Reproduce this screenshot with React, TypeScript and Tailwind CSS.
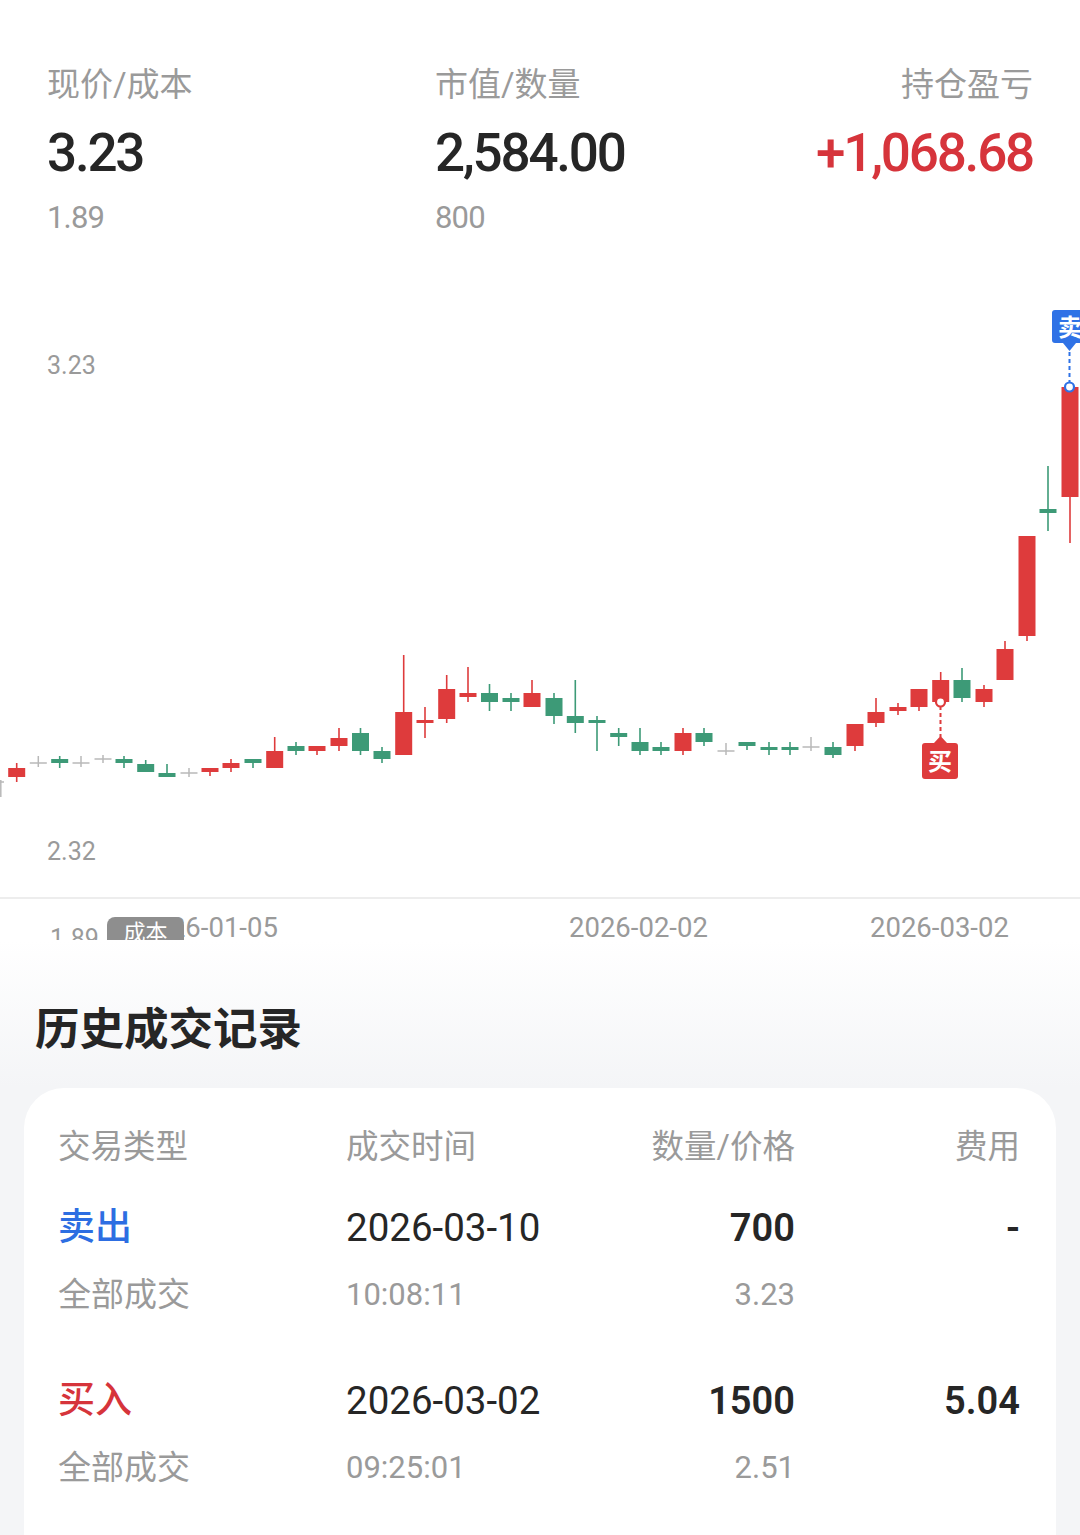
import React from "react";

type C = [number, number, number, number, number, "r" | "g" | "n"];

const RED = "#de3b3c";
const GREEN = "#3d9a77";
const GRAY = "#b8b8b8";

const candles: C[] = [
  [16.7, 768, 777, 763, 782, "r"],
  [38.3, 763, 763, 756, 767, "n"],
  [59.7, 759, 763, 756, 768, "g"],
  [81, 763, 763, 756, 767, "n"],
  [103, 759, 759, 755, 763, "n"],
  [124, 759, 763, 756, 768, "g"],
  [145.7, 764, 772, 760, 772, "g"],
  [167, 773, 777, 764, 777, "g"],
  [189, 773, 773, 768, 777, "n"],
  [210, 768, 772, 768, 776, "r"],
  [231, 763, 768, 759, 772, "r"],
  [253, 759, 763, 759, 768, "g"],
  [274.7, 751, 768, 737, 768, "r"],
  [296, 746, 751, 742, 755, "g"],
  [317, 746, 751, 746, 755, "r"],
  [339, 738, 746, 728, 751, "r"],
  [360.5, 733, 751, 728, 755, "g"],
  [382, 751, 759, 747, 763, "g"],
  [403.7, 712, 755, 655, 755, "r"],
  [425, 720, 723, 707, 738, "r"],
  [446.7, 689, 719, 675, 723, "r"],
  [468, 693, 697, 667, 702, "r"],
  [489.5, 693, 702, 684, 711, "g"],
  [511, 698, 702, 693, 711, "g"],
  [532, 693, 707, 680, 707, "r"],
  [554, 698, 716, 693, 724, "g"],
  [575.3, 716, 723, 680, 733, "g"],
  [597, 720, 723, 716, 751, "g"],
  [618.7, 733, 737, 728, 746, "g"],
  [640, 742, 751, 728, 755, "g"],
  [661, 747, 751, 742, 755, "g"],
  [683, 733, 751, 728, 755, "r"],
  [704, 733, 742, 728, 746, "g"],
  [726, 751, 751, 743, 755, "n"],
  [747, 742, 746, 742, 750, "g"],
  [769, 747, 750, 742, 755, "g"],
  [790, 747, 750, 742, 755, "g"],
  [811, 747, 747, 737, 751, "n"],
  [833, 747, 755, 742, 758, "g"],
  [855, 724, 746, 724, 751, "r"],
  [876, 712, 723, 698, 727, "r"],
  [898, 707, 711, 703, 715, "r"],
  [919, 689, 707, 689, 711, "r"],
  [940.7, 680, 702, 672, 702, "r"],
  [962, 680, 698, 668, 702, "g"],
  [984, 689, 702, 685, 707, "r"],
  [1005, 649, 680, 641, 680, "r"],
  [1027, 536, 636, 536, 641, "r"],
  [1048, 509, 513, 466, 531, "g"],
  [1070, 387, 497, 387, 543, "r"],
];

function Chart() {
  return (
    <svg
      width={1080}
      height={702}
      viewBox="0 238 1080 702"
      className="absolute left-0 top-0"
    >
      <line x1={0.8} y1={780} x2={0.8} y2={797} stroke={GRAY} strokeWidth={1.5} />
      <line x1={0} y1={782} x2={4} y2={782} stroke={GRAY} strokeWidth={1.5} />
      {candles.map(([x, bt, bb, wt, wb, c], i) => {
        const col = c === "r" ? RED : c === "g" ? GREEN : GRAY;
        if (c === "n") {
          return (
            <g key={i}>
              <line x1={x} y1={wt} x2={x} y2={wb} stroke={col} strokeWidth={1.5} />
              <line x1={x - 8.5} y1={bt} x2={x + 8.5} y2={bt} stroke={col} strokeWidth={1.5} />
            </g>
          );
        }
        const h = Math.max(bb - bt, 3);
        return (
          <g key={i}>
            <line x1={x} y1={wt} x2={x} y2={wb} stroke={col} strokeWidth={1.6} />
            <rect x={x - 8.5} y={bt} width={17} height={h} fill={col} />
          </g>
        );
      })}

      {/* buy marker */}
      <line x1={940.5} y1={706} x2={940.5} y2={737} stroke={RED} strokeWidth={2} strokeDasharray="4 3" />
      <circle cx={940.5} cy={702} r={4.5} fill="#fff" stroke={RED} strokeWidth={2.2} />
      <path d="M925 743 H934 L940.5 736 L947 743 H955 Q958 743 958 746 V776 Q958 779 955 779 H925 Q922 779 922 776 V746 Q922 743 925 743 Z" fill={RED} />
      <text x={940} y={770} textAnchor="middle" fontSize={24} fontWeight={600} fill="#fff" fontFamily="'Noto Sans CJK SC', sans-serif">买</text>

      {/* sell marker */}
      <path d="M1055 310 H1085 Q1088 310 1088 313 V340 Q1088 343 1085 343 H1076 L1069.5 351 L1063 343 H1055 Q1052 343 1052 340 V313 Q1052 310 1055 310 Z" fill="#2f72e6" />
      <text x={1070} y={336} textAnchor="middle" fontSize={24} fontWeight={600} fill="#fff" fontFamily="'Noto Sans CJK SC', sans-serif">卖</text>
      <line x1={1069.5} y1={352} x2={1069.5} y2={383} stroke="#2f72e6" strokeWidth={2} strokeDasharray="4 3" />
      <circle cx={1069.5} cy={387} r={4.5} fill="#fff" stroke="#2f72e6" strokeWidth={2.2} />
    </svg>
  );
}

const FONT = "font-['Roboto','Noto_Sans_CJK_SC',sans-serif]";

export default function App() {
  return (
    <div className={`w-[1080px] h-[1535px] overflow-hidden bg-white ${FONT}`}>
      {/* summary header */}
      <div className="flex justify-between px-[47px] pt-[65px] h-[238px]">
        <div className="flex flex-col w-[388px]">
          <div className="text-[33px] leading-[40px] text-[#9a9a9a]">现价/成本</div>
          <div className="mt-[18px] text-[53px] leading-[60px] font-medium tracking-[-2.2px] text-[#262626]">3.23</div>
          <div className="mt-[15px] text-[31px] leading-[40px] text-[#9a9a9a] tracking-[-0.8px]">1.89</div>
        </div>
        <div className="flex flex-col flex-1">
          <div className="text-[33px] leading-[40px] text-[#9a9a9a]">市值/数量</div>
          <div className="mt-[18px] text-[53px] leading-[60px] font-medium tracking-[-2.2px] text-[#262626]">2,584.00</div>
          <div className="mt-[15px] text-[31px] leading-[40px] text-[#9a9a9a] tracking-[-0.8px]">800</div>
        </div>
        <div className="flex flex-col items-end">
          <div className="text-[33px] leading-[40px] text-[#9a9a9a]">持仓盈亏</div>
          <div className="mt-[18px] text-[53px] leading-[60px] font-medium tracking-[-2.2px] text-[#d6343b]">+1,068.68</div>
        </div>
      </div>

      {/* chart */}
      <div className="relative h-[702px] overflow-hidden">
        <Chart />
        <div className="absolute left-[47px] top-[113px] text-[25px] leading-[30px] text-[#9a9a9a]">3.23</div>
        <div className="absolute left-[47px] top-[599px] text-[25px] leading-[30px] text-[#9a9a9a]">2.32</div>
        <div className="absolute left-0 right-0 top-[659px] h-[2px] bg-[#ededed]" />
        <div className="absolute left-[139px] top-[674px] text-[27.5px] leading-[32px] text-[#9a9a9a]">2026-01-05</div>
        <div className="absolute left-[569px] top-[674px] text-[27.5px] leading-[32px] text-[#9a9a9a]">2026-02-02</div>
        <div className="absolute left-[870px] top-[674px] text-[27.5px] leading-[32px] text-[#9a9a9a]">2026-03-02</div>
        <div className="absolute left-[50px] top-[686px] text-[25px] leading-[30px] text-[#9a9a9a]">1.89</div>
        <div className="absolute left-[107px] top-[679px] w-[77px] h-[32px] rounded-[8px] bg-[#8e8e8e] flex items-center justify-center text-[22px] leading-[28px] text-white">成本</div>
      </div>

      {/* history */}
      <div className="bg-[#f4f5f7] h-[595px]">
        <div className="h-[148px] bg-gradient-to-b from-white to-[#f4f5f7] pl-[35px] pt-[64px]">
          <div className="text-[44.5px] leading-[52px] font-bold text-[#262626]">历史成交记录</div>
        </div>
        <div className="mx-[24px] h-[500px] rounded-[40px] bg-white pl-[34px] pr-[36px] pt-[39px]">
          <div className="grid grid-cols-[288px_250px_199px_1fr] text-[32.5px] leading-[40px] text-[#9a9a9a]">
            <div>交易类型</div>
            <div>成交时间</div>
            <div className="text-right">数量/价格</div>
            <div className="text-right">费用</div>
          </div>

          <div className="mt-[39px] grid grid-cols-[288px_250px_199px_1fr]">
            <div className="text-[37px] leading-[44px] font-medium text-[#2d6ee2]">卖出</div>
            <div className="text-[38.5px] leading-[44px] text-[#262626]">2026-03-10</div>
            <div className="text-right text-[38px] leading-[44px] font-semibold text-[#262626]">700</div>
            <div className="text-right text-[38px] leading-[44px] font-semibold text-[#262626]">-</div>
          </div>
          <div className="mt-[25px] grid grid-cols-[288px_250px_199px_1fr] text-[#9a9a9a]">
            <div className="text-[33px] leading-[40px]">全部成交</div>
            <div className="text-[31px] leading-[40px]">10:08:11</div>
            <div className="text-right text-[31px] leading-[40px]">3.23</div>
            <div />
          </div>

          <div className="mt-[64px] grid grid-cols-[288px_250px_199px_1fr]">
            <div className="text-[37px] leading-[44px] font-medium text-[#d6343b]">买入</div>
            <div className="text-[38.5px] leading-[44px] text-[#262626]">2026-03-02</div>
            <div className="text-right text-[38px] leading-[44px] font-semibold text-[#262626]">1500</div>
            <div className="text-right text-[38px] leading-[44px] font-semibold text-[#262626]">5.04</div>
          </div>
          <div className="mt-[25px] grid grid-cols-[288px_250px_199px_1fr] text-[#9a9a9a]">
            <div className="text-[33px] leading-[40px]">全部成交</div>
            <div className="text-[31px] leading-[40px]">09:25:01</div>
            <div className="text-right text-[31px] leading-[40px]">2.51</div>
            <div />
          </div>
        </div>
      </div>
    </div>
  );
}
